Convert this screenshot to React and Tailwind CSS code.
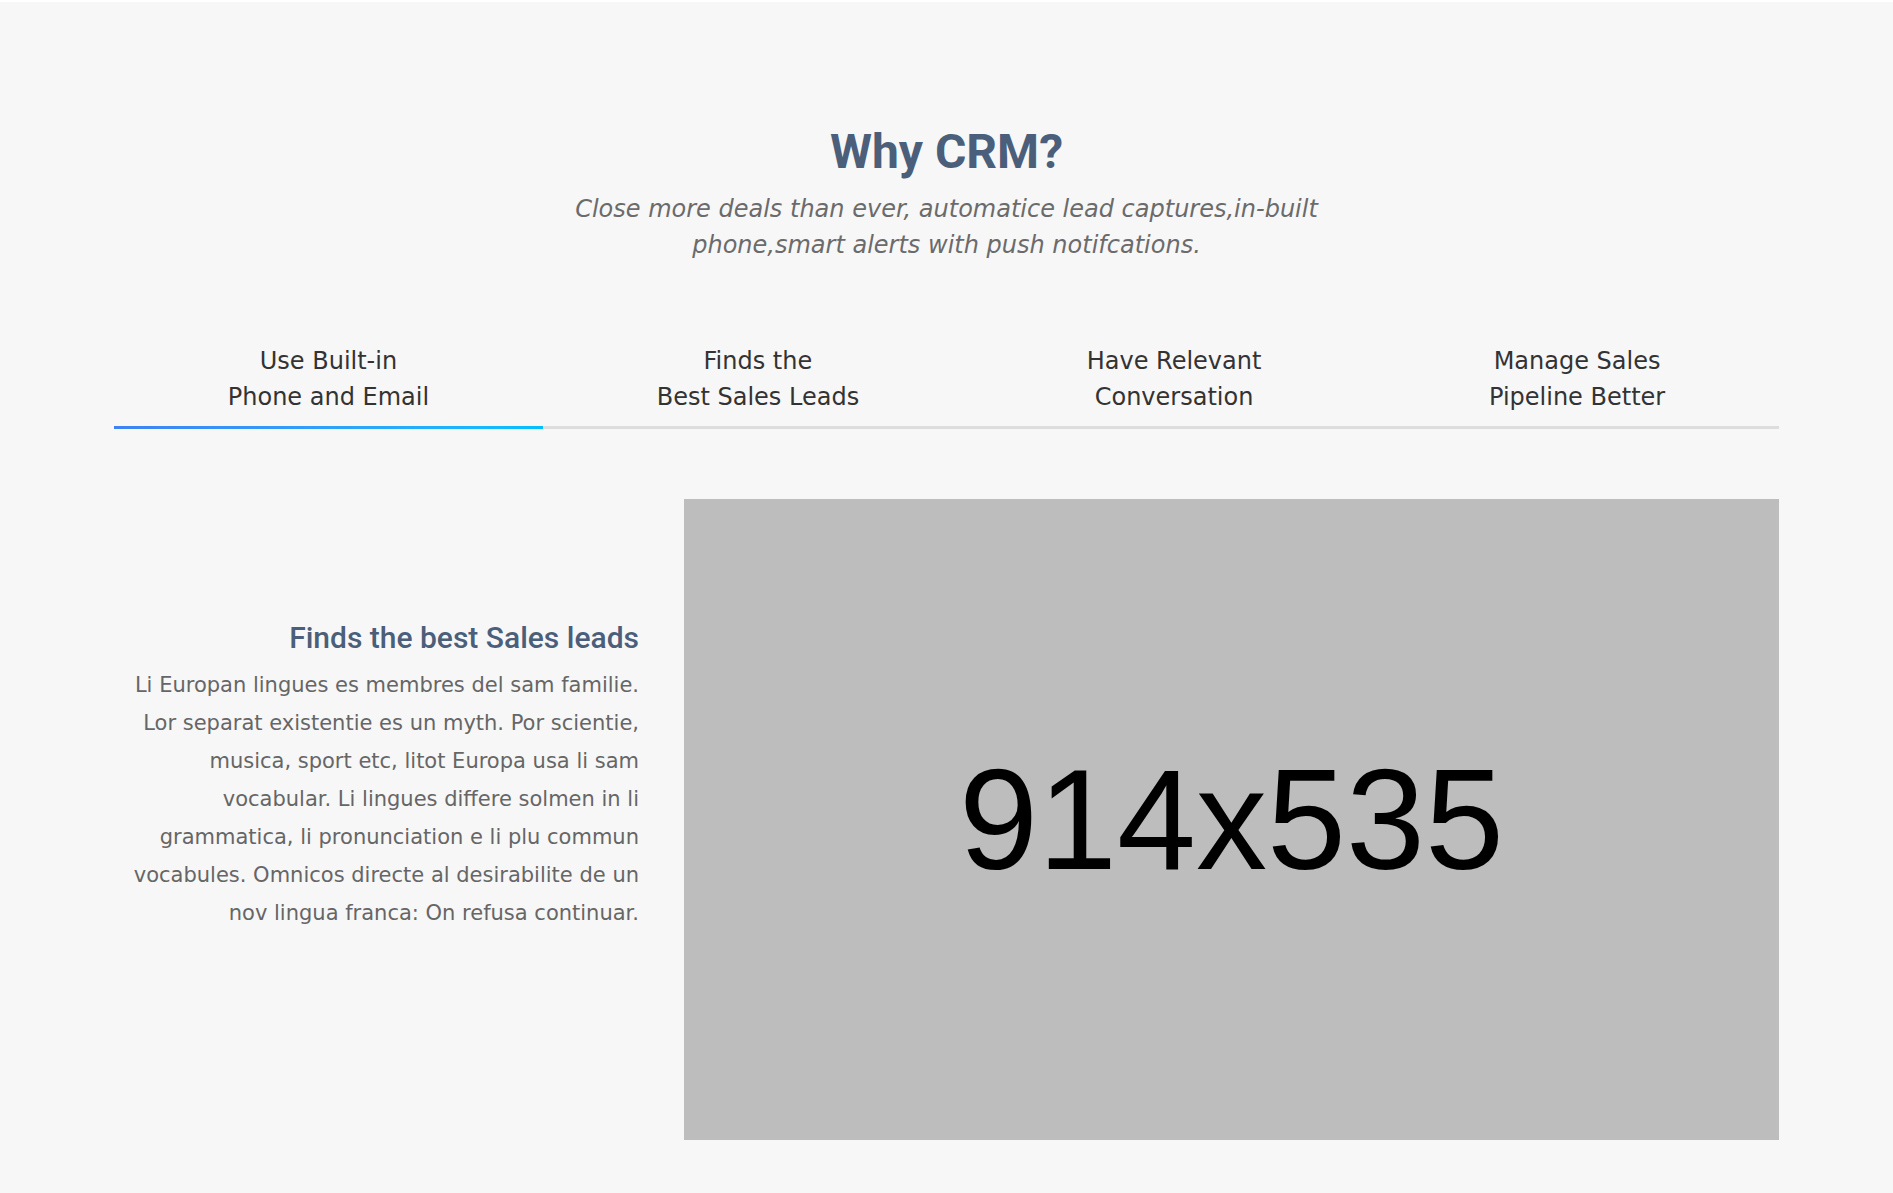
const tabs = [
  ["Use Built-in", "Phone and Email"],
  ["Finds the", "Best Sales Leads"],
  ["Have Relevant", "Conversation"],
  ["Manage Sales", "Pipeline Better"],
];

const lines = [
  "Li Europan lingues es membres del sam familie.",
  "Lor separat existentie es un myth. Por scientie,",
  "musica, sport etc, litot Europa usa li sam",
  "vocabular. Li lingues differe solmen in li",
  "grammatica, li pronunciation e li plu commun",
  "vocabules. Omnicos directe al desirabilite de un",
  "nov lingua franca: On refusa continuar.",
];

export default function App() {
  return (
    <div className="min-h-[1193px] bg-[#f7f7f7] border-t-2 border-white font-['DejaVu_Sans',sans-serif]">
      <div className="mx-auto w-[1665px] pt-[120px]">
        <div className="text-center">
          <h2 className="font-['Roboto',sans-serif] font-bold text-[48px] leading-[60px] text-[#4b5f7a]">
            Why CRM?
          </h2>
          <p className="mt-[9px] italic text-[24px] leading-[36px] text-[#6b6b6b]">
            Close more deals than ever, automatice lead captures,in-built
            <br />
            phone,smart alerts with push notifcations.
          </p>
        </div>

        <div className="mt-[80px] flex border-b-[3px] border-[#dddddd]">
          {tabs.map((t, i) => (
            <div key={i} className="relative flex-auto text-center pb-[11px]">
              <div className="text-[24px] leading-[36px] text-[#333333]">
                {t[0]}
                <br />
                {t[1]}
              </div>
              {i === 0 && (
                <div className="absolute left-0 right-0 -bottom-[3px] h-[3px] bg-gradient-to-r from-[#3f82f3] to-[#00bfff]" />
              )}
            </div>
          ))}
        </div>

        <div className="mt-[70px] flex items-center gap-[45px]">
          <div className="w-[525px] text-right mb-[88px]">
            <h3 className="font-['Roboto',sans-serif] font-medium text-[30px] leading-[36px] text-[#4b5f7a]">
              Finds the best Sales leads
            </h3>
            <p className="mt-[10px] text-[21px] leading-[38px] text-[#666666]">
              {lines.map((l, i) => (
                <span key={i}>
                  {l}
                  <br />
                </span>
              ))}
            </p>
          </div>
          <div className="flex-1 h-[641px] bg-[#bdbdbd] flex items-center justify-center">
            <span className="font-['Liberation_Sans',Arial,sans-serif] text-[142px] text-black">
              914x535
            </span>
          </div>
        </div>
      </div>
    </div>
  );
}
